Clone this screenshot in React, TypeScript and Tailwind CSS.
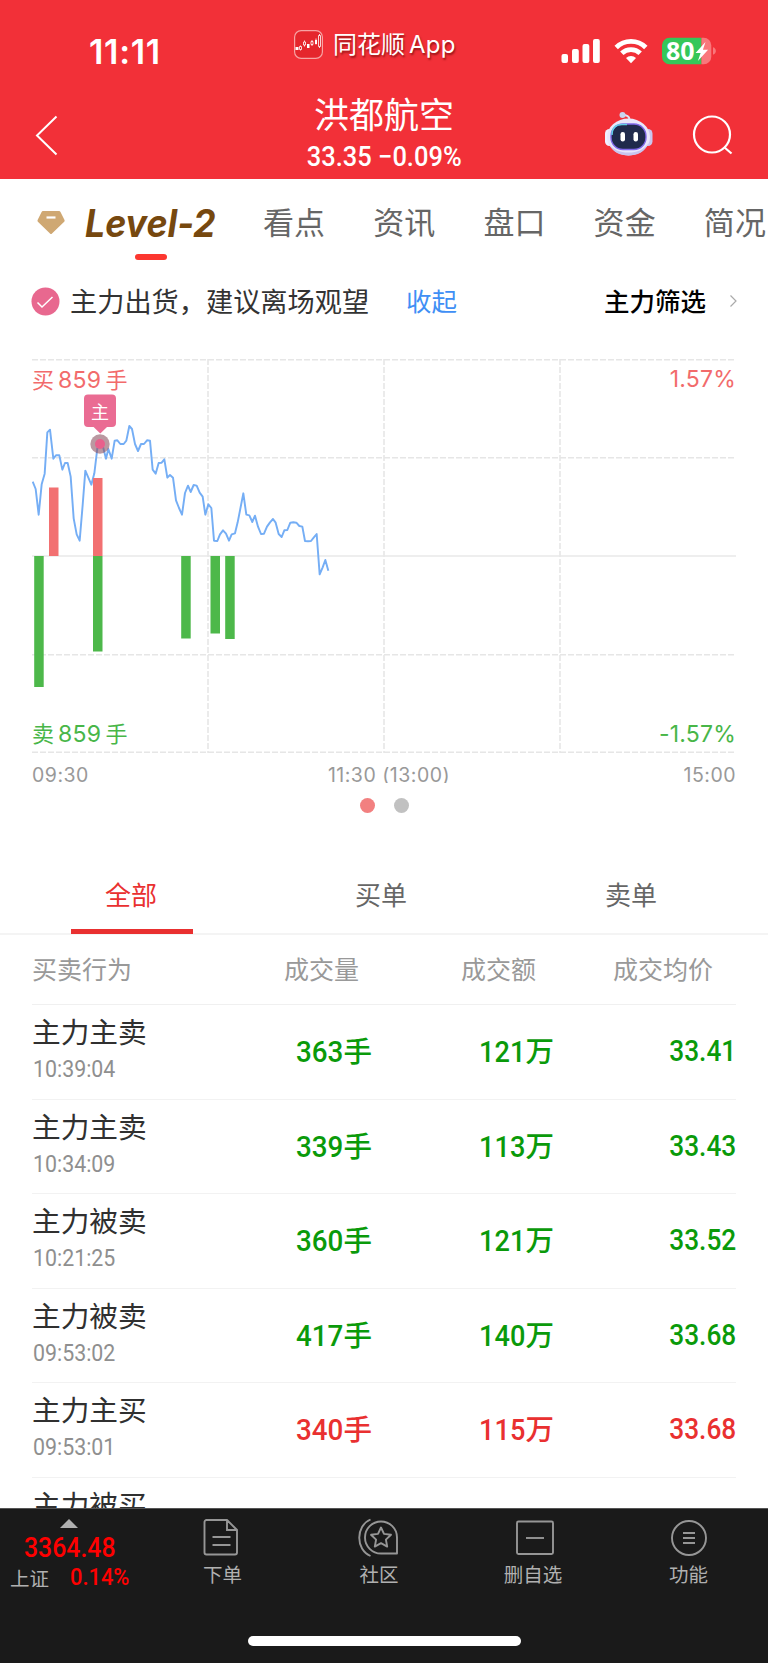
import React from "react";
import clsx from "clsx";

const navTabs = ["看点", "资讯", "盘口", "资金", "简况"];

const orderTabs = ["全部", "买单", "卖单"];

const orders = [
  { name: "主力主卖", time: "10:39:04", volume: "363", amount: "121", price: "33.41", side: "sell" },
  { name: "主力主卖", time: "10:34:09", volume: "339", amount: "113", price: "33.43", side: "sell" },
  { name: "主力被卖", time: "10:21:25", volume: "360", amount: "121", price: "33.52", side: "sell" },
  { name: "主力被卖", time: "09:53:02", volume: "417", amount: "140", price: "33.68", side: "sell" },
  { name: "主力主买", time: "09:53:01", volume: "340", amount: "115", price: "33.68", side: "buy" },
];

// x, top, height
const buyBars = [
  [17, 128.5, 68.5],
  [61, 119, 78],
];

const sellBars = [
  [2.2, 197, 131],
  [61, 197, 95.5],
  [149.2, 197, 82.5],
  [178.5, 197, 77.5],
  [193.2, 197, 83],
];

const pricePoints =
  "38,410 47,432 56,509 65,418 74,386 82,262 90,254 100,341 108,331 118,331 127,374 135,354 143,354 152,395 161,520 170,568 179,587 188,480 196,377 206,400 214,419 223,385 232,310 241,300 249,305 258,341 265,312 275,341 284,287 292,286 301,297 311,297 319,287 328,243 336,252 345,297 354,318 363,297 372,297 381,286 390,287 398,374 407,386 416,354 425,353 433,343 442,398 450,390 459,398 468,466 477,489 486,509 495,444 504,422 512,441 521,420 530,422 539,443 548,455 556,509 565,478 574,489 582,587 592,588 600,568 609,556 618,566 627,587 635,568 645,565 653,532 662,486 670,445 679,509 688,511 697,531 705,512 714,545 723,567 732,566 741,545 750,532 759,522 767,533 776,567 785,576 793,556 802,555 811,533 820,532 829,533 838,543 847,545 855,588 864,589 873,588 881,578 890,567 899,688 908,667 916,645 925,677";

function Num({ children, className }: { children: React.ReactNode; className?: string }) {
  return (
    <span className={clsx("inline-block whitespace-nowrap font-[Roboto,sans-serif] leading-none", className)}>
      {children}
    </span>
  );
}

function StatusBar() {
  return (
    <div className="relative flex h-[90px] items-start">
      <span className="ml-[89px] mt-[35px] w-[205px] font-[Inter,sans-serif] text-[34px] font-semibold leading-none tracking-[0.700px]">
        11:11
      </span>
      <svg className="mt-[30px] h-[29px] w-[29px]" viewBox="0 0 29 29" fill="none" stroke="#fff">
        <rect x="0.6" y="0.6" width="27.8" height="27.8" rx="6.5" fill="#e5262c" stroke="#f7a3a3" strokeWidth="1.2" />
        <path d="M6.5 15.5v5M10.5 10.5v6M18 10v6M22 8.500v6M25.500 4v14" strokeWidth="0.8" />
        <path d="M1.500 17h3v3h-3zM13 14h2.500v4H13zM21 10h2v4h-2z" fill="#fff" stroke="none" />
        <path d="M5.500 16.500h2v3h-2zM9.500 12h2v3h-2zM17 11.500h2v3h-2zM24.500 5.500h2v11h-2z" fill="#e5262c" strokeWidth="0.8" />
      </svg>
      <span className="ml-[10px] mt-[31px] whitespace-nowrap text-[24px] leading-none [text-shadow:1px_2px_2px_rgba(90,0,0,0.6)]">
        同花顺
        <span className="ml-[4px] font-[Inter,sans-serif] tracking-[0.3px]">App</span>
      </span>
      <svg className="absolute left-[561px] top-[37px] h-[28px] w-[156px]" viewBox="0 0 156 28" fill="#fff">
        <rect x="0.500" y="17" width="6.500" height="9" rx="2" />
        <rect x="11" y="12" width="6.800" height="14" rx="2" />
        <rect x="21.500" y="7" width="6.800" height="19" rx="2" />
        <rect x="32" y="2" width="6.800" height="24" rx="2" />
        <g fill="none" stroke="#fff" strokeWidth="4.800">
          <path d="M55.200 10.500a21 21 0 0 1 29.600 0" />
          <path d="M60.800 16.300a13.200 13.200 0 0 1 18.400 0" />
        </g>
        <path d="M70 26.200l-5-5.100a7.300 7.300 0 0 1 10 0z" />
        <path d="M108.500 0.800H140.500V27.200H108.500a7.500 7.500 0 0 1-7.500-7.500V8.300a7.500 7.500 0 0 1 7.500-7.500z" fill="#35c759" />
        <path d="M140.500 0.800h2.300a7.500 7.500 0 0 1 7.500 7.500v11.400a7.500 7.500 0 0 1-7.500 7.500h-2.300z" fill="#f9777b" />
        <path d="M152 10.300c3.800 1.100 3.800 6.300 0 7.400z" fill="#f9777b" />
        <path d="M144.500 5l-10 10.900h5.100l-2.700 8 10.200-11.200h-5.200z" />
      </svg>
      <span className="absolute left-[666px] top-[37px] font-['Open_Sans',sans-serif] text-[25px] font-bold leading-[27px]">
        80
      </span>
    </div>
  );
}

function Robot() {
  return (
    <svg className="h-[46px] w-[50px]" viewBox="0 0 50 46" fill="none">
      <path d="M18.500 4c4.500 0 6.500 1 7 4" stroke="#dfe3f5" strokeWidth="2" />
      <circle cx="18.500" cy="4" r="3" fill="#c9d4f0" />
      <rect x="1" y="18" width="9" height="17" rx="4.500" fill="#f1efff" />
      <rect x="39" y="18" width="9.500" height="17" rx="4.500" fill="#cbc5ee" />
      <ellipse cx="24.500" cy="26" rx="21.500" ry="18.500" fill="#e9e7fb" />
      <path d="M4.500 32c4 9 11 12.500 20 12.500S41 41 44.500 32c-5 7-11 9.500-20 9.500S9 39 4.500 32z" fill="#c8c4ee" />
      <rect x="7" y="13" width="35" height="25.500" rx="12" fill="#202a4c" stroke="#8068e8" strokeWidth="1.400" />
      <path d="M8 24c0-7 4-10.500 10-10.500h5" stroke="#63cfe8" strokeWidth="1.500" />
      <rect x="16.500" y="21" width="4.500" height="9.500" rx="2.200" fill="#fff" />
      <rect x="29.500" y="21" width="4.500" height="9.500" rx="2.200" fill="#fff" />
    </svg>
  );
}

function Header() {
  return (
    <header className="h-[179px] bg-[#f23038] text-white">
      <StatusBar />
      <div className="flex h-[89px] items-start">
        <svg className="ml-[34px] mt-[25px] h-[41px] w-[26px]" viewBox="0 0 26 41" fill="none" stroke="#fff" strokeWidth="2">
          <path d="M22.500 1.500L3 20.500l19.500 19" />
        </svg>
        <div className="ml-[204px] w-[240px] text-center">
          <h1 className="mt-[5px] text-[35px] leading-[36px]">洪都航空</h1>
          <Num className="mt-[12px] origin-center scale-x-[0.92] text-[27.700px] font-medium">33.35 −0.09%</Num>
        </div>
        <div className="ml-[100px] mt-[21px]">
          <Robot />
        </div>
        <svg className="ml-[38px] mt-[24px] h-[42px] w-[42px]" viewBox="0 0 42 42" fill="none" stroke="#fff" strokeWidth="2.200">
          <circle cx="20" cy="20.500" r="18" />
          <path d="M32 33l7.500 6.500" />
        </svg>
      </div>
    </header>
  );
}

function SectionTabs() {
  return (
    <nav className="flex h-[89px] overflow-hidden">
      <svg className="ml-[37px] mt-[32px] h-[24px] w-[28px] shrink-0" viewBox="0 0 28 24">
        <path d="M6 0h16q1 0 1.500 1l4 8q.5 1-.3 1.800L15 22.400q-1 1-2 0L.9 10.800Q.2 10 .6 9l4-8Q5 0 6 0z" fill="#cfa873" />
        <path d="M9.500 6.500h9" stroke="#fff" strokeWidth="2.200" />
      </svg>
      <div className="ml-[20px] w-[178px] shrink-0">
        <div className="mt-[25px] h-[39px] origin-left scale-x-[0.94] whitespace-nowrap font-[Inter,sans-serif] text-[38px] font-bold italic leading-[39px] text-[#76480f]">
          Level-2
        </div>
        <div className="ml-[50px] mt-[11px] h-[6px] w-[32px] rounded-full bg-[#fc3730]" />
      </div>
      <div className="mt-[26px] flex gap-12 text-[31px] leading-none tracking-[0.100px] text-[#666]">
        {navTabs.map((tab) => (
          <span key={tab} className="shrink-0 whitespace-nowrap">
            {tab}
          </span>
        ))}
      </div>
    </nav>
  );
}

function Signal() {
  return (
    <div className="flex h-[66px] items-center pl-[31px] pr-[31px]">
      <svg className="h-[29px] w-[29px]" viewBox="0 0 29 29" fill="none">
        <circle cx="14.500" cy="14.500" r="14" fill="#e8688f" />
        <path d="M6.500 15.500l4.500 4.500L21.500 10" stroke="#fff" strokeWidth="1.500" />
      </svg>
      <span className="ml-[10px] whitespace-nowrap text-[27.200px] leading-none text-[#333]">主力出货，建议离场观望</span>
      <span className="mb-[3px] ml-[37px] whitespace-nowrap text-[25.500px] leading-none text-[#3f8ff5]">收起</span>
      <span className="mb-[2px] ml-auto whitespace-nowrap text-[25.500px] font-medium leading-none text-black">
        主力筛选
      </span>
      <svg className="ml-[23px] h-[14px] w-[8px]" viewBox="0 0 8 14" fill="none" stroke="#aaa" strokeWidth="1.200">
        <path d="M1.500 1.500L7 7l-5.500 5.500" />
      </svg>
    </div>
  );
}

function Chart() {
  return (
    <section className="mt-[25px] px-8">
      <div className="relative h-[394px]">
        <svg className="h-[394px] w-[704px]" viewBox="0 0 704 394" fill="none">
          <g stroke="#e6e6e6" strokeWidth="1.600" strokeDasharray="6 2">
            <path d="M0 .8H704M0 98.800H704M0 295.800H704M0 393.200H704" />
            <path d="M176 0V394M352 0V394M528 0V394" />
          </g>
          <path d="M0 197H704" stroke="#e8e8e8" strokeWidth="1.600" />
          <polyline
            points={pricePoints}
            transform="translate(-12 -14) scale(0.33333)"
            stroke="#75aef5"
            strokeWidth="5.800"
            strokeLinejoin="round"
          />
          {buyBars.map(([x, y, h]) => (
            <rect key={x} x={x} y={y} width="9.500" height={h} fill="#f27071" />
          ))}
          {sellBars.map(([x, y, h]) => (
            <rect key={x} x={x} y={y} width="9.500" height={h} fill="#4db84a" />
          ))}
          <circle cx="68" cy="85" r="9.700" fill="#8c5463" fillOpacity="0.6" />
          <circle cx="68" cy="85" r="5" fill="#e8608c" />
          <path d="M56 35.500h24a4 4 0 0 1 4 4v24.500a4 4 0 0 1-4 4h-5l-6.700 6.500-6.700-6.500H56a4 4 0 0 1-4-4V39.500a4 4 0 0 1 4-4z" fill="#ea6c93" />
        </svg>
        <span className="absolute left-[59px] top-[43px] text-[18px] leading-none text-white">主</span>
        <div className="absolute left-0 top-[8px] flex w-full items-center justify-between text-[#f26b6b]">
          <span className="text-[22px] leading-none">
            买<span className="mx-[4px] font-[Inter,sans-serif] text-[23px] tracking-[0.300px]">859</span>手
          </span>
          <span className="font-[Inter,sans-serif] text-[23px] leading-none tracking-[0.200px]">1.57%</span>
        </div>
        <div className="absolute bottom-[7px] left-0 flex w-full items-center justify-between text-[#48b648]">
          <span className="text-[22px] leading-none">
            卖<span className="mx-[4px] font-[Inter,sans-serif] text-[23px] tracking-[0.300px]">859</span>手
          </span>
          <span className="pt-[1px] font-[Inter,sans-serif] text-[23px] leading-none tracking-[0.200px]">-1.57%</span>
        </div>
      </div>
      <div className="mt-[12px] grid h-[18px] grid-cols-3 overflow-hidden font-[Inter,sans-serif] text-[19.500px] leading-[20px] tracking-[0.500px] text-[#999]">
        <span>09:30</span>
        <span className="whitespace-nowrap pl-[10px] text-center">11:30 (13:00)</span>
        <span className="text-right">15:00</span>
      </div>
      <div className="mt-[15px] flex justify-center gap-[19px]">
        <i className="h-[15px] w-[15px] rounded-full bg-[#f28080]" />
        <i className="h-[15px] w-[15px] rounded-full bg-[#c1c1c1]" />
      </div>
    </section>
  );
}

function OrderTabs() {
  return (
    <div className="mt-[45px] grid h-[77px] grid-cols-3 border-b-2 border-[#f4f4f4] pl-[7px] pr-[11px] text-[26px] leading-none text-[#666]">
      {orderTabs.map((tab, i) => (
        <div key={tab} className="flex flex-col items-center">
          <span className={clsx("mr-[2px] mt-[23px]", i === 0 && "text-[#e93030]")}>{tab}</span>
          {i === 0 && <span className="mt-[22px] h-[5px] w-[122px] shrink-0 bg-[#e93030]" />}
        </div>
      ))}
    </div>
  );
}

function OrderTable() {
  return (
    <section className="mx-8">
      <div className="grid h-[70px] grid-cols-[252px_177px_152px_123px] items-center border-b border-[#f0f0f0] pb-[2px] text-[25px] leading-none text-[#999]">
        <span>买卖行为</span>
        <span>成交量</span>
        <span>成交额</span>
        <span className="whitespace-nowrap">成交均价</span>
      </div>
      {orders.map((order) => (
        <div
          key={order.time}
          className={clsx(
            "grid h-[94.500px] grid-cols-[200px_140px_182px_182px] items-center border-b border-[#f2f2f2]",
            order.side === "sell" ? "text-[#0a9a0a]" : "text-[#e93030]"
          )}
        >
          <div className="flex h-full flex-col pt-[11px]">
            <span className="text-[28.700px] leading-[30px] text-[#303030]">{order.name}</span>
            <Num className="ml-[1px] mt-[11px] w-[100px] origin-left scale-x-[0.89] text-[24px] text-[#8f8f8f]">
              {order.time}
            </Num>
          </div>
          <span className="text-right text-[28.500px] font-medium leading-none">
            <Num className="origin-right scale-x-[0.94] text-[29.500px]">{order.volume}</Num>手
          </span>
          <span className="text-right text-[28.500px] font-medium leading-none">
            <Num className="origin-right scale-x-[0.92] text-[29.500px]">{order.amount}</Num>万
          </span>
          <span className="text-right">
            <Num className="origin-right scale-x-[0.89] text-[29.500px] font-medium">{order.price}</Num>
          </span>
        </div>
      ))}
      <div className="h-[94px] pt-[11px] text-[28.700px] leading-[30px] text-[#303030]">主力被买</div>
    </section>
  );
}

function NavItem({ label, children }: { label: string; children: React.ReactNode }) {
  return (
    <div className="flex flex-col items-center">
      <svg className="mt-[8px] h-[42px] w-[44px]" viewBox="0 0 44 42" fill="none" stroke="#969696" strokeWidth="1.900">
        {children}
      </svg>
      <span className="mt-[5px] text-[19.500px] leading-none">{label}</span>
    </div>
  );
}

function BottomBar() {
  return (
    <footer className="relative h-[155px] border-t border-[#555] bg-[#1a1a1a] text-[#b0b0b0]">
      <div className="grid grid-cols-[144px_157px_156px_152px_159px]">
        <div>
          <svg className="ml-[60px] mt-[10px] h-[9px] w-[18px]" viewBox="0 0 18 9">
            <path d="M9 0l9 9H0z" fill="#b0b0b0" />
          </svg>
          <Num className="ml-[24px] mt-[7px] origin-left scale-x-[0.92] text-[27px] font-medium text-[#ff0000]">3364.48</Num>
          <div className="flex items-center pt-[4px]">
            <span className="ml-[10px] w-[60px] text-[19.500px] leading-none">上证</span>
            <Num className="origin-left scale-x-[0.93] text-[23.500px] font-medium text-[#ff0000]">0.14%</Num>
          </div>
        </div>
        <NavItem label="下单">
          <path d="M5.500 3h20.500l10 10v22.500a2 2 0 0 1-2 2H5.500a2 2 0 0 1-2-2V5a2 2 0 0 1 2-2z M26 3v10h10M11.500 20h18M11.500 28h18" />
        </NavItem>
        <NavItem label="社区">
          <path d="M40 36.500V20.500A16 16 0 1 0 24 36.500z" strokeLinejoin="round" />
          <path d="M13.500 2.500C-1.500 9 -1.500 32.500 13.500 39" />
          <path d="M24 10.500l3 6.400 7 .9-5.100 4.800 1.300 7-6.200-3.400-6.200 3.400 1.300-7-5.100-4.800 7-.9z" strokeLinejoin="round" />
        </NavItem>
        <NavItem label="删自选">
          <rect x="6" y="4.500" width="36" height="32.500" rx="1.500" />
          <path d="M15 21h18" />
        </NavItem>
        <NavItem label="功能">
          <circle cx="22" cy="21" r="17" />
          <path d="M16 16h12M16 21h12M16 26h12" />
        </NavItem>
      </div>
      <div className="absolute bottom-[17px] left-[248px] h-[10px] w-[273px] rounded-full bg-white" />
    </footer>
  );
}

export default function App() {
  return (
    <div className="w-[768px] bg-white font-['Noto_Sans_CJK_SC',sans-serif]">
      <main className="h-[1508px] overflow-hidden">
        <Header />
        <SectionTabs />
        <Signal />
        <Chart />
        <OrderTabs />
        <OrderTable />
      </main>
      <BottomBar />
    </div>
  );
}
